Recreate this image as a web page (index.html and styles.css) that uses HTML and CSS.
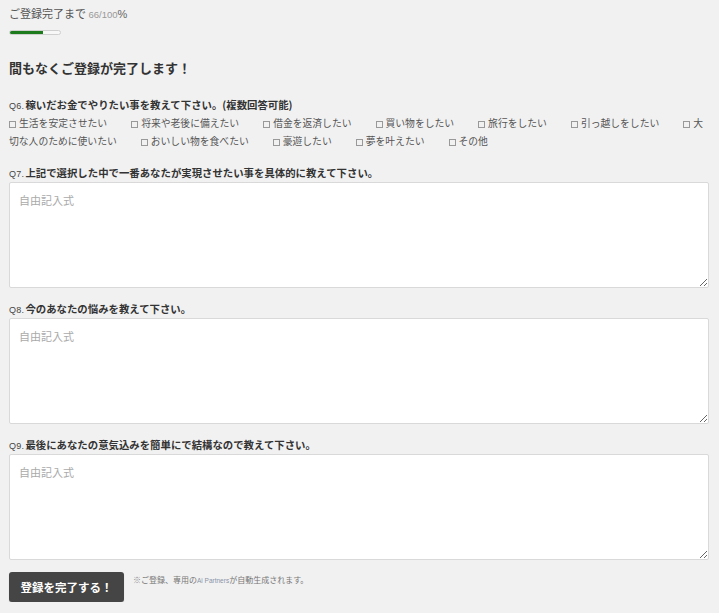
FILE: index.html
```html
<!DOCTYPE html>
<html lang="ja">
<head>
<meta charset="utf-8">
<title>ご登録</title>
<link rel="stylesheet" href="styles.css">
</head>
<body>
<div class="page">
  <div class="progress-text">ご登録完了まで <span class="num">66/100</span><span class="pct">%</span></div>
  <div class="bar"><div class="fill" style="width:66%"></div></div>

  <h1 class="title">間もなくご登録が完了します！</h1>

  <div class="q first">
    <div class="label"><span class="qn">Q6.</span>稼いだお金でやりたい事を教えて下さい。(複数回答可能)</div>
    <div class="opts"><span class="opt"><span class="box"></span>生活を安定させたい</span><span class="opt"><span class="box"></span>将来や老後に備えたい</span><span class="opt"><span class="box"></span>借金を返済したい</span><span class="opt"><span class="box"></span>買い物をしたい</span><span class="opt"><span class="box"></span>旅行をしたい</span><span class="opt"><span class="box"></span>引っ越しをしたい</span><span class="opt"><span class="box"></span><span>大</span><span>切な人のために使いたい</span></span><span class="opt"><span class="box"></span>おいしい物を食べたい</span><span class="opt"><span class="box"></span>豪遊したい</span><span class="opt"><span class="box"></span>夢を叶えたい</span><span class="opt"><span class="box"></span>その他</span></div>
  </div>

  <div class="q">
    <div class="label"><span class="qn">Q7.</span>上記で選択した中で一番あなたが実現させたい事を具体的に教えて下さい。</div>
    <textarea class="ta" placeholder="自由記入式"></textarea>
  </div>

  <div class="q">
    <div class="label"><span class="qn">Q8.</span>今のあなたの悩みを教えて下さい。</div>
    <textarea class="ta" placeholder="自由記入式"></textarea>
  </div>

  <div class="q">
    <div class="label"><span class="qn">Q9.</span>最後にあなたの意気込みを簡単にで結構なので教えて下さい。</div>
    <textarea class="ta" placeholder="自由記入式"></textarea>
  </div>

  <div class="submit-row">
    <button class="btn" type="button">登録を完了する！</button>
    <p class="note"><span class="mark">※</span>ご登録、専用の<span class="ai">Ai Partners</span>が自動生成されます。</p>
  </div>
</div>
</body>
</html>
```

FILE: styles.css
```css
html, body {
  margin: 0;
  padding: 0;
  background: #f1f1f1;
}
body {
  font-family: "Noto Sans CJK JP", "Noto Sans", sans-serif;
  color: #333;
}
.page {
  width: 700px;
  padding: 7px 0 0 9px;
}
.progress-text {
  font-size: 11px;
  line-height: 12px;
  color: #555;
  white-space: nowrap;
}
.progress-text .num {
  font-family: "Liberation Sans", sans-serif;
  font-size: 9.5px;
  color: #999;
}
.progress-text .pct {
  font-family: "Liberation Sans", sans-serif;
  font-size: 11px;
  color: #666;
}
.bar {
  margin-top: 9px;
  width: 52px;
  height: 5px;
  box-sizing: border-box;
  border: 1px solid #cfcfcf;
  border-radius: 3px;
  background: #f7f7f7;
  overflow: hidden;
}
.fill {
  height: 100%;
  background: #1d7a1d;
}
.title {
  margin: 24px 0 0;
  font-size: 13px;
  line-height: 18px;
  font-weight: bold;
  color: #333;
}
.q {
  margin-top: 13px;
}
.q.first {
  margin-top: 20px;
}
.label {
  font-size: 10.4px;
  line-height: 16px;
  font-weight: bold;
  color: #333;
  white-space: nowrap;
}
.qn {
  font-family: "Liberation Sans", sans-serif;
  font-size: 9px;
  font-weight: normal;
  color: #444;
  margin-right: 1px;
  letter-spacing: 0.3px;
}
.opts {
  margin: 0;
  padding-bottom: 2px;
  font-size: 9.8px;
  line-height: 18px;
  color: #555;
}
.opt {
  margin-right: 24px;
}
.box {
  display: inline-block;
  width: 7px;
  height: 7px;
  box-sizing: border-box;
  border: 1px solid #999;
  margin-right: 3px;
  vertical-align: -0.5px;
}
.ta {
  display: block;
  margin: 0;
  width: 700px;
  height: 106px;
  box-sizing: border-box;
  border: 1px solid #d9d9d9;
  border-radius: 2px;
  background: #fff;
  padding: 9px 9px;
  font-family: "Noto Sans CJK JP", sans-serif;
  font-size: 11px;
  line-height: 16px;
  color: #333;
}
.ta::placeholder {
  color: #aaa;
}
.submit-row {
  display: flex;
  align-items: flex-start;
  gap: 9px;
  margin-top: 12px;
}
.btn {
  width: 115px;
  height: 30px;
  border: none;
  border-radius: 3px;
  background: #454545;
  color: #fff;
  font-family: "Noto Sans CJK JP", sans-serif;
  font-size: 11.5px;
  font-weight: bold;
  box-shadow: 0 1px 1px rgba(0,0,0,0.2);
  padding: 0;
  cursor: pointer;
}
.note {
  margin: 2px 0 0;
  font-size: 8px;
  line-height: 12px;
  color: #777;
}
.note .mark {
  font-family: "Noto Sans CJK JP", "DejaVu Sans", sans-serif;
  font-variant-emoji: text;
  color: #888;
}
.note .ai {
  font-family: "Liberation Sans", sans-serif;
  font-size: 6.5px;
  color: #8a93a8;
}
```
